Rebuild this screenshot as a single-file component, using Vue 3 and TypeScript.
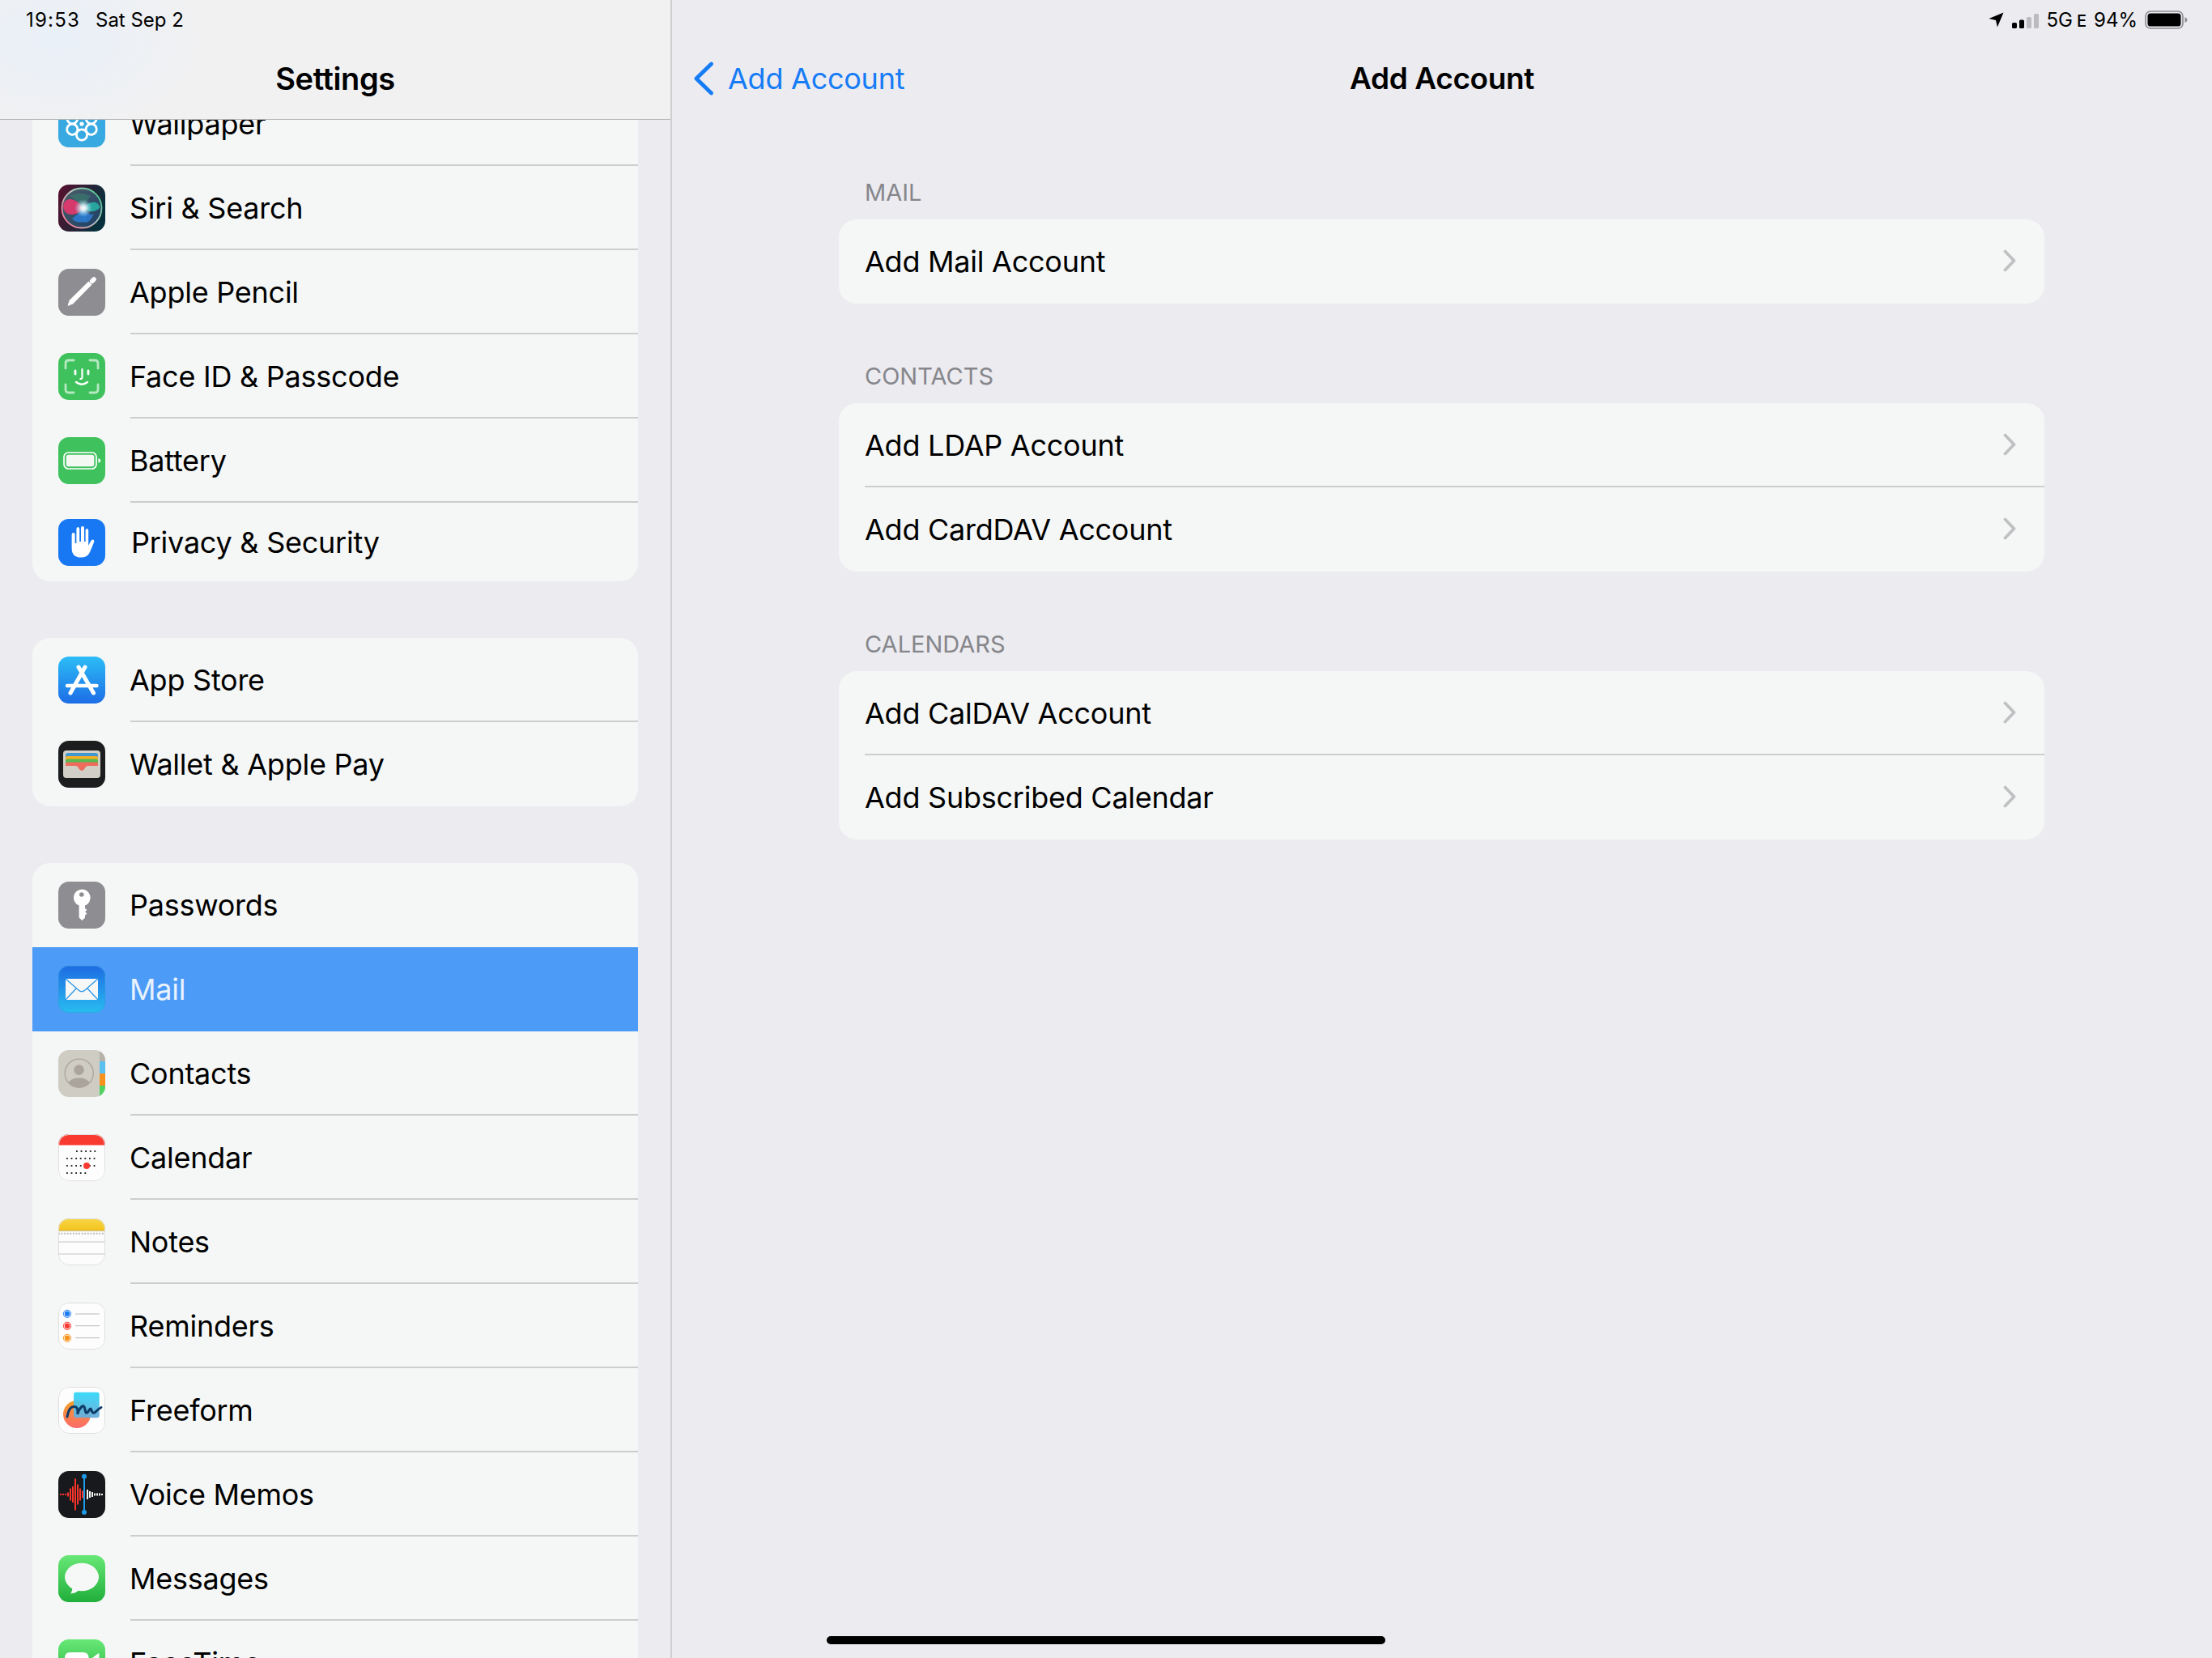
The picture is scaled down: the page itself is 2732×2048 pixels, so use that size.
<script setup lang="ts">
interface Row { label: string; icon: string; cls?: string }

const groups: Row[][] = [
  [
    { label: 'Wallpaper', icon: 'wallpaper' },
    { label: 'Siri & Search', icon: 'siri' },
    { label: 'Apple Pencil', icon: 'pencil' },
    { label: 'Face ID & Passcode', icon: 'faceid' },
    { label: 'Battery', icon: 'battery' },
    { label: 'Privacy & Security', icon: 'privacy', cls: 'short' },
  ],
  [
    { label: 'App Store', icon: 'appstore' },
    { label: 'Wallet & Apple Pay', icon: 'wallet' },
  ],
  [
    { label: 'Passwords', icon: 'passwords', cls: 'nosep' },
    { label: 'Mail', icon: 'mail', cls: 'selected' },
    { label: 'Contacts', icon: 'contacts' },
    { label: 'Calendar', icon: 'calendar' },
    { label: 'Notes', icon: 'notes' },
    { label: 'Reminders', icon: 'reminders' },
    { label: 'Freeform', icon: 'freeform' },
    { label: 'Voice Memos', icon: 'voice' },
    { label: 'Messages', icon: 'messages' },
    { label: 'FaceTime', icon: 'facetime' },
  ],
]

const sections = [
  { title: 'MAIL', rows: ['Add Mail Account'] },
  { title: 'CONTACTS', rows: ['Add LDAP Account', 'Add CardDAV Account'] },
  { title: 'CALENDARS', rows: ['Add CalDAV Account', 'Add Subscribed Calendar'] },
]

const petals = [0, 60, 120, 180, 240, 300]
const redBars = [
  [2, 2], [5, 2], [8, 2], [11, 5], [14, 15], [17, 20], [20, 39], [23, 25], [26, 15], [29, 9],
]
const whiteBars = [[35, 12], [38, 8], [41, 6], [44, 3], [47, 3], [50, 3], [53, 2]]
</script>

<template>
  <div class="screen">
    <aside class="sidebar">
      <header class="side-head">
        <div class="status-left"><span class="st-time">19:53</span><span>Sat Sep 2</span></div>
        <h1 class="title">Settings</h1>
      </header>
      <div class="list">
        <section v-for="(group, g) in groups" :key="g" class="card">
          <div v-for="row in group" :key="row.label" class="row" :class="row.cls">
            <svg class="icon" viewBox="0 0 58 58" aria-hidden="true">
              <defs>
                <clipPath id="squircle"><rect width="58" height="58" rx="13" /></clipPath>
                <linearGradient id="gBlue" x1="0" y1="0" x2="0" y2="1"><stop offset="0" stop-color="#2cbdf6" /><stop offset="1" stop-color="#1d6de6" /></linearGradient>
                <linearGradient id="gMail" x1="0" y1="0" x2="0" y2="1"><stop offset="0" stop-color="#1e6be2" /><stop offset="1" stop-color="#28bdf1" /></linearGradient>
                <linearGradient id="gGreen" x1="0" y1="0" x2="0" y2="1"><stop offset="0" stop-color="#68e877" /><stop offset="1" stop-color="#20ae3a" /></linearGradient>
                <linearGradient id="gYellow" x1="0" y1="0" x2="0" y2="1"><stop offset="0" stop-color="#f8d648" /><stop offset="1" stop-color="#f3c31c" /></linearGradient>
                <linearGradient id="gCircle" x1="0" y1="0" x2="0" y2="1"><stop offset="0" stop-color="#f4a027" /><stop offset="1" stop-color="#fb6a6a" /></linearGradient>
                <linearGradient id="gSquare" x1="0" y1="0" x2="0" y2="1"><stop offset="0" stop-color="#31d8f9" /><stop offset="1" stop-color="#6bacd9" /></linearGradient>
                <radialGradient id="gSiriCore" cx="0.5" cy="0.5" r="0.5"><stop offset="0" stop-color="#ffffff" /><stop offset="0.3" stop-color="#e8f8fb" stop-opacity="0.9" /><stop offset="1" stop-color="#8fd4ec" stop-opacity="0" /></radialGradient>
                <linearGradient id="gSiriBg" x1="0" y1="0" x2="1" y2="0.4"><stop offset="0" stop-color="#5a0f2e" /><stop offset="1" stop-color="#07303c" /></linearGradient>
                <linearGradient id="gSiriRing" x1="0" y1="0.8" x2="1" y2="0"><stop offset="0" stop-color="#f47b97" /><stop offset="0.5" stop-color="#b9c9c4" /><stop offset="1" stop-color="#2fc07d" /></linearGradient>
                <linearGradient id="gSiriFill" x1="0" y1="0" x2="1" y2="1"><stop offset="0" stop-color="#4e5e68" /><stop offset="1" stop-color="#1a3f66" /></linearGradient>
              </defs>
              <g clip-path="url(#squircle)">
                <template v-if="row.icon === 'wallpaper'">
                  <rect width="58" height="58" fill="#38a9e1" />
                  <circle v-for="a in petals" :key="a" cx="29" cy="15.5" r="6.6" fill="none" stroke="#fff" stroke-width="2.8" :transform="`rotate(${a} 29 29)`" />
                  <circle cx="29" cy="29" r="2.6" fill="#fff" />
                </template>
                <template v-else-if="row.icon === 'siri'">
                  <rect width="58" height="58" fill="url(#gSiriBg)" />
                  <circle cx="29" cy="29" r="25" fill="url(#gSiriFill)" />
                  <circle cx="29" cy="29" r="24.5" fill="none" stroke="url(#gSiriRing)" stroke-width="1.8" />
                  <path d="M6 27 Q7 18 15 18 Q24 19 31 29 Q24 38 15 37 Q7 36 6 27 Z" fill="#e4386e" opacity="0.92" />
                  <path d="M31 29 Q39 20 46 22 Q52 25 51 29 Q46 34 39 33 Q35 32 31 29 Z" fill="#27b0a4" opacity="0.9" />
                  <path d="M31 29 Q38 40 31 46 Q22 48 17 42 Q25 36 31 29 Z" fill="#2b7bd0" opacity="0.9" />
                  <path d="M31 29 Q39 40 44 36 Q38 50 31 46 Z" fill="#2b7bd0" opacity="0.85" />
                  <path d="M14 14 Q26 8 40 14 Q34 22 31 29 Q24 20 14 14 Z" fill="#3b7f70" opacity="0.6" />
                  <circle cx="31" cy="29" r="11" fill="url(#gSiriCore)" />
                </template>
                <template v-else-if="row.icon === 'pencil'">
                  <rect width="58" height="58" fill="#8e8d92" />
                  <path d="M11.5 46 L13.6 39 L37.4 15.4 L41.6 19.6 L18 43.6 Z" fill="#fff" />
                  <path d="M41.8 15.2 L44 13" stroke="#fff" stroke-width="5.6" stroke-linecap="round" />
                </template>
                <template v-else-if="row.icon === 'faceid'">
                  <rect width="58" height="58" fill="#3fc25d" />
                  <path d="M9 19 V13 Q9 9 13 9 H19 M39 9 H45 Q49 9 49 13 V19 M49 39 V45 Q49 49 45 49 H39 M19 49 H13 Q9 49 9 45 V39" fill="none" stroke="#fff" stroke-opacity="0.62" stroke-width="2.8" stroke-linecap="round" />
                  <path d="M21 22 V26 M37 22 V26" stroke="#fff" stroke-width="2.8" stroke-linecap="round" />
                  <path d="M29.5 20 V30 Q29.5 32 27.3 32" fill="none" stroke="#fff" stroke-width="2.2" stroke-linecap="round" />
                  <path d="M22 36 Q29 41.5 36 36" fill="none" stroke="#fff" stroke-width="2.4" stroke-linecap="round" />
                </template>
                <template v-else-if="row.icon === 'battery'">
                  <rect width="58" height="58" fill="#3fc25d" />
                  <rect x="7" y="19" width="40" height="20" rx="5.5" fill="none" stroke="#fff" stroke-width="1.7" />
                  <rect x="9.7" y="21.7" width="34.6" height="14.6" rx="3" fill="#f3f8f3" />
                  <path d="M49.5 26 Q52.3 27 52.3 29 Q52.3 31 49.5 32 Z" fill="#fff" />
                </template>
                <template v-else-if="row.icon === 'privacy'">
                  <rect width="58" height="58" fill="#1878f3" />
                  <path d="M16.6 20 Q16.6 17 18.6 17 Q20.6 17 20.6 20 V30 H22.4 V12.6 Q22.4 10 24.3 10 Q26.2 10 26.2 12.6 V28 H28 V11 Q28 9 30 9 Q32 9 32 11 V28 H33.6 V14.5 Q33.6 12 35.4 12 Q37.2 12 37.2 14.5 V33 L40 27.5 Q41.8 24.6 43.6 25.8 Q45 27 44 29 L39 41 Q36.3 47.6 28 47.6 Q16.6 47.6 16.6 36 Z" fill="#fff" />
                </template>
                <template v-else-if="row.icon === 'appstore'">
                  <rect width="58" height="58" fill="url(#gBlue)" />
                  <path d="M33 13 L15 45 M25 13 L43.5 45" stroke="#fff" stroke-width="5" stroke-linecap="round" />
                  <path d="M11 36 H47.5" stroke="#fff" stroke-width="4.4" stroke-linecap="round" />
                </template>
                <template v-else-if="row.icon === 'wallet'">
                  <rect width="58" height="58" fill="#1c1d1f" />
                  <rect x="6" y="12" width="46" height="34" rx="4" fill="#d2cfc6" />
                  <path d="M9 30 V18 Q9 15 12 15 H46 Q49 15 49 18 V30 Z" fill="#4199d2" />
                  <path d="M9 30 V21 Q9 19 11 19 H47 Q49 19 49 21 V30 Z" fill="#f6ae24" />
                  <path d="M9 30 V24.5 Q9 22.5 11 22.5 H47 Q49 22.5 49 24.5 V30 Z" fill="#57b950" />
                  <path d="M9 31 V28.5 Q9 26.5 11 26.5 H47 Q49 26.5 49 28.5 V31 H37 Q34 31 32.8 34 Q31.5 37 29 37 Q26.5 37 25.2 34 Q24 31 21 31 Z" fill="#ee6c5c" />
                </template>
                <template v-else-if="row.icon === 'passwords'">
                  <rect width="58" height="58" fill="#8e8d92" />
                  <path d="M29 9.5 A10.4 10.4 0 0 1 33 29.6 V33 L35.4 35 L33 37.2 L35.4 39.4 L33 41.8 V44.5 L29.4 48 L25.6 44.5 V29.6 A10.4 10.4 0 0 1 29 9.5 Z" fill="#fff" />
                  <circle cx="28.8" cy="16" r="2.8" fill="#8e8d92" />
                </template>
                <template v-else-if="row.icon === 'mail'">
                  <rect width="58" height="58" fill="url(#gMail)" />
                  <rect x="0.5" y="0.5" width="57" height="57" rx="12.5" fill="none" stroke="#2d9bd8" stroke-opacity="0.6" />
                  <rect x="9" y="16" width="40" height="26" fill="#f6f8f7" />
                  <path d="M9 16 L25 30 Q29 33.5 33 30 L49 16 M9 42 L22.5 27.5 M49 42 L35.5 27.5" fill="none" stroke="#2a97ea" stroke-width="1.3" />
                </template>
                <template v-else-if="row.icon === 'contacts'">
                  <rect width="58" height="58" fill="#cfccc4" />
                  <rect x="51" y="0" width="7" height="14" fill="#b5b2aa" />
                  <rect x="51" y="14" width="7" height="15" fill="#5bbfef" />
                  <rect x="51" y="29" width="7" height="15" fill="#f6921d" />
                  <rect x="51" y="44" width="7" height="14" fill="#4fd25f" />
                  <circle cx="25.7" cy="28.7" r="17.6" fill="none" stroke="#aaa49d" stroke-width="1.3" />
                  <circle cx="25.5" cy="24.6" r="6.3" fill="#aaa49d" />
                  <path d="M12.6 40.5 Q16 34.6 25.7 34.6 Q35 34.6 38.8 40.5 A17.6 17.6 0 0 1 12.6 40.5 Z" fill="#aaa49d" />
                </template>
                <template v-else-if="row.icon === 'calendar'">
                  <rect width="58" height="58" fill="#fdfdfd" />
                  <rect width="58" height="13.5" fill="#f83a30" />
                  <rect x="0.5" y="0.5" width="57" height="57" rx="12.5" fill="none" stroke="#dfdfdf" />
                  <g stroke="#2a2a2a" stroke-width="2" stroke-dasharray="1.8 3.8">
                    <path d="M22 21 H49" />
                    <path d="M10 30 H49" />
                    <path d="M10 39 H49" />
                    <path d="M10 48 H37" />
                  </g>
                  <circle cx="35" cy="39" r="4" fill="#f83a30" />
                </template>
                <template v-else-if="row.icon === 'notes'">
                  <rect width="58" height="58" fill="#fcfcfc" />
                  <rect width="58" height="15" fill="url(#gYellow)" />
                  <path d="M0 15.3 H58" stroke="#b9a76a" stroke-width="0.8" />
                  <path d="M0 18.7 H58" stroke="#b8b8ba" stroke-width="2" stroke-dasharray="1.8 1.8" />
                  <path d="M0 29 H58 M0 44 H58" stroke="#bdbdc0" stroke-width="0.9" />
                  <rect x="0.5" y="0.5" width="57" height="57" rx="12.5" fill="none" stroke="#dededf" />
                </template>
                <template v-else-if="row.icon === 'reminders'">
                  <rect width="58" height="58" fill="#fdfdfd" />
                  <rect x="0.5" y="0.5" width="57" height="57" rx="12.5" fill="none" stroke="#dededf" />
                  <g fill="none" stroke-width="1">
                    <circle cx="11" cy="13.8" r="4.6" stroke="#1c7cf3" />
                    <circle cx="11" cy="28.8" r="4.6" stroke="#f83a30" />
                    <circle cx="11" cy="43.8" r="4.6" stroke="#f6921d" />
                  </g>
                  <circle cx="11" cy="13.8" r="3.2" fill="#1c7cf3" />
                  <circle cx="11" cy="28.8" r="3.2" fill="#f83a30" />
                  <circle cx="11" cy="43.8" r="3.2" fill="#f6921d" />
                  <path d="M21 14 H51 M21 28.7 H51 M21 43.6 H51" stroke="#b9b9bd" stroke-width="1" />
                </template>
                <template v-else-if="row.icon === 'freeform'">
                  <rect width="58" height="58" fill="#fdfdfd" />
                  <rect x="0.5" y="0.5" width="57" height="57" rx="12.5" fill="none" stroke="#dededf" />
                  <circle cx="23" cy="34" r="17" fill="url(#gCircle)" />
                  <rect x="19" y="6.7" width="31.7" height="31.5" rx="3" fill="url(#gSquare)" fill-opacity="0.95" />
                  <path d="M11 37 Q13 25 19 24.5 Q25 24 23.8 34 Q25 28 29 24.5 Q32 22 33 28 Q34 36 38 29 Q40 25 41 29 Q43 35 47 30 Q50 27 53 25.5" fill="none" stroke="#0e3a67" stroke-width="3" stroke-linecap="round" />
                </template>
                <template v-else-if="row.icon === 'voice'">
                  <rect width="58" height="58" fill="#18191c" />
                  <rect v-for="b in redBars" :key="b[0]" :x="b[0]" :y="29 - b[1] / 2" width="2" :height="b[1]" fill="#f9352b" />
                  <rect v-for="b in whiteBars" :key="b[0]" :x="b[0]" :y="29 - b[1] / 2" width="2" :height="b[1]" fill="#f4f4f4" />
                  <path d="M32 7 V51" stroke="#1e9be8" stroke-width="2" />
                  <circle cx="32" cy="6.7" r="3" fill="#1e9be8" />
                  <circle cx="32" cy="51" r="3" fill="#1e9be8" />
                </template>
                <template v-else-if="row.icon === 'messages'">
                  <rect width="58" height="58" fill="url(#gGreen)" />
                  <ellipse cx="29" cy="27" rx="21" ry="17.3" fill="#f6f8f7" />
                  <path d="M17 38 Q18 44 15 47.5 Q22 47 25.5 43 Z" fill="#f6f8f7" />
                </template>
                <template v-else-if="row.icon === 'facetime'">
                  <rect width="58" height="58" fill="url(#gGreen)" />
                  <rect x="8" y="16" width="29.5" height="26" rx="6" fill="#fff" />
                  <path d="M40 24.5 L49 17.5 Q50.5 16.8 50.5 19 V39 Q50.5 41.2 49 40.5 L40 33.5 Z" fill="#fff" />
                </template>
              </g>
            </svg>
            <div class="row-body"><span class="row-label">{{ row.label }}</span></div>
          </div>
        </section>
      </div>
    </aside>

    <main class="detail">
      <div class="status-right">
        <svg class="st-loc" viewBox="0 0 20 20" aria-hidden="true"><path d="M0.5 8.5 L19.5 0.5 L11.5 19.5 L9.5 10.5 Z" fill="#000" /></svg>
        <svg class="st-sig" viewBox="0 0 33 18" aria-hidden="true">
          <rect x="0" y="11" width="6" height="7" rx="1.6" fill="#000" />
          <rect x="9" y="7.5" width="6" height="10.5" rx="1.6" fill="#000" />
          <rect x="18" y="4" width="6" height="14" rx="1.6" fill="#bcbcc0" />
          <rect x="27" y="0" width="6" height="18" rx="1.6" fill="#bcbcc0" />
        </svg>
        <span class="st-5g">5G</span>
        <span class="st-e">E</span>
        <span class="st-pct">94%</span>
        <svg class="st-bat" viewBox="0 0 53 23" aria-hidden="true">
          <rect x="1" y="1" width="46" height="21" rx="6" fill="none" stroke="#8b8b8f" stroke-width="1.6" />
          <rect x="3.5" y="3.5" width="41" height="16" rx="3.6" fill="#000" />
          <path d="M49.5 8 Q52.5 9.5 52.5 11.5 Q52.5 13.5 49.5 15 Z" fill="#8b8b8f" />
        </svg>
      </div>
      <nav class="detail-nav">
        <div class="back">
          <svg class="back-chev" viewBox="0 0 26 42" aria-hidden="true"><path d="M22.5 3 L4 21 L22.5 39" fill="none" stroke="#167cf6" stroke-width="4.8" stroke-linecap="round" stroke-linejoin="round" /></svg>
          <span>Add Account</span>
        </div>
        <h2 class="title detail-title">Add Account</h2>
        <div></div>
      </nav>
      <div class="detail-body">
        <section v-for="s in sections" :key="s.title" class="group">
          <div class="group-label">{{ s.title }}</div>
          <div class="group-card">
            <div v-for="r in s.rows" :key="r" class="group-row">
              <span class="row-label">{{ r }}</span>
              <svg class="chev" viewBox="0 0 16 28" aria-hidden="true"><path d="M2.5 2.5 L13.5 14 L2.5 25.5" fill="none" stroke="#c0c0c3" stroke-width="3.8" stroke-linecap="round" stroke-linejoin="round" /></svg>
            </div>
          </div>
        </section>
      </div>
    </main>

    <div class="home-bar"></div>
  </div>
</template>

<style>
html, body { margin: 0; background: #ebebf0; }
</style>

<style scoped>
.screen {
  position: relative;
  display: flex;
  width: 2732px;
  height: 2048px;
  overflow: hidden;
  background: #ebebf0;
  color: #000;
  font-family: Inter, "Liberation Sans", sans-serif;
}
.sidebar {
  width: 828px;
  height: 2048px;
  flex: none;
  display: flex;
  flex-direction: column;
  border-right: 2px solid #d0d0d3;
  overflow: hidden;
}
.side-head {
  position: relative;
  z-index: 2;
  height: 148px;
  flex: none;
  box-sizing: border-box;
  border-bottom: 1.5px solid #b5b5b8;
  background: radial-gradient(ellipse 180px 110px at 70px 50px, #e9f0f8 0%, rgba(233, 240, 248, 0) 100%), #f1f1f2;
}
.status-left {
  display: flex;
  gap: 19px;
  height: 48px;
  padding-left: 32px;
  align-items: center;
  font-size: 24px;
}
.st-time { letter-spacing: 1.2px; }
.title {
  margin: 24px 0 0;
  font-size: 38px;
  font-weight: 600;
  letter-spacing: -0.4px;
  line-height: 50px;
  text-align: center;
}
.detail-title { font-size: 37px; }
.list {
  flex: 1;
  margin-top: -47px;
  display: flex;
  flex-direction: column;
  gap: 70px;
  padding: 0 40px;
}
.card {
  flex: none;
  background: #f5f7f6;
  border-radius: 22px;
  overflow: hidden;
}
.row {
  height: 104px;
  display: flex;
  align-items: center;
  box-sizing: border-box;
  padding-left: 32px;
}
.row.short { height: 97px; }
.row.short .row-label { margin-left: 1px; }
.row.selected { background: #4c9bf6; color: #e9f2fd; }
.icon {
  width: 58px;
  height: 58px;
  flex: none;
  margin-right: 31px;
}
.row-body {
  flex: 1;
  height: 100%;
  display: flex;
  align-items: center;
  border-bottom: 2px solid #cdcdd0;
  box-sizing: border-box;
}
.row:last-child .row-body,
.row.selected .row-body,
.row.nosep .row-body { border-bottom-color: transparent; }
.row-label {
  font-size: 36px;
  letter-spacing: -0.25px;
  line-height: 50px;
  padding-top: 2px;
}
.row .row-label { margin-left: -1px; }
.detail {
  flex: 1;
  min-width: 0;
  display: flex;
  flex-direction: column;
}
.status-right {
  height: 48px;
  display: flex;
  align-items: center;
  justify-content: flex-end;
  padding-right: 30px;
  font-size: 24px;
}
.st-loc { width: 19px; height: 19px; margin-right: 10px; }
.st-sig { width: 33px; height: 18px; margin-right: 9px; margin-top: 4px; }
.st-5g { margin-right: 5px; }
.st-e { font-size: 20px; font-weight: 500; margin-right: 9px; margin-top: 4px; }
.st-pct { margin-right: 9px; }
.st-bat { width: 53px; height: 23px; }
.detail-nav {
  height: 100px;
  display: grid;
  grid-template-columns: 1fr auto 1fr;
  align-items: start;
}
.back {
  display: flex;
  align-items: center;
  height: 50px;
  margin-top: 24px;
  padding-left: 26px;
  color: #167cf6;
  font-size: 36px;
  letter-spacing: -0.25px;
}
.back-chev { width: 26px; height: 42px; margin-right: 17px; flex: none; }
.detail-body {
  padding: 0 207px 0 206px;
}
.group { padding-top: 72px; }
.group-label {
  height: 36px;
  margin-bottom: 15px;
  padding-left: 32px;
  color: #86868b;
  font-size: 29px;
  line-height: 36px;
}
.group-card {
  background: #f5f7f6;
  border-radius: 22px;
  overflow: hidden;
}
.group-row {
  height: 104px;
  box-sizing: border-box;
  margin-left: 32px;
  padding-right: 35px;
  display: flex;
  align-items: center;
  justify-content: space-between;
  border-bottom: 2px solid #cdcdd0;
}
.group-row:last-child { border-bottom-color: transparent; }
.chev { width: 16px; height: 28px; flex: none; }
.home-bar {
  position: absolute;
  left: 1021px;
  top: 2021px;
  width: 690px;
  height: 10px;
  border-radius: 5px;
  background: #000;
}
</style>
